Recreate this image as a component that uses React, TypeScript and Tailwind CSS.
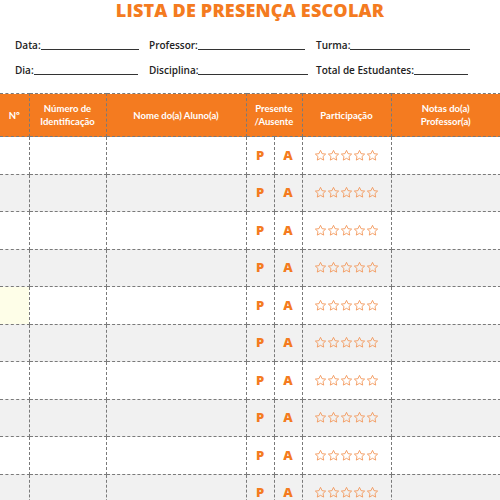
const rows = Array.from({ length: 10 }, (_, i) => i);

function Star() {
  return (
    <svg width="13" height="13" viewBox="0 0 24 24" fill="none" stroke="#f39a5e" strokeWidth="1.7" strokeLinejoin="round">
      <path d="M12 2.5l2.9 6.1 6.6.8-4.9 4.5 1.3 6.6L12 17.2l-5.9 3.3 1.3-6.6-4.9-4.5 6.6-.8z" />
    </svg>
  );
}

function Field({ label, className }: { label: string; className: string }) {
  return (
    <div className={`flex items-end ${className}`}>
      <span>{label}</span>
      <span className="mb-[2px] flex-1 border-b border-[#333]" />
    </div>
  );
}

export default function App() {
  const cell = "border border-dashed border-[#7a7a7a]";
  const letter = `${cell} text-center font-['Open_Sans',sans-serif] text-[13px] font-extrabold text-[#f47b20]`;
  return (
    <div className="h-[500px] w-[500px] overflow-hidden bg-white font-['Open_Sans',sans-serif]">
      <h1 className="h-[20px] text-center text-[18px] font-extrabold leading-[20px] tracking-[0.2px] text-[#f47b20]">
        LISTA DE PRESENÇA ESCOLAR
      </h1>

      <div className="mt-[19px] flex flex-col gap-[12px] pl-[15px] text-[10px] font-semibold leading-[13px] text-[#222]">
        <div className="flex">
          <Field label="Data:" className="w-[124px]" />
          <Field label="Professor:" className="ml-[10px] w-[156px]" />
          <Field label="Turma:" className="ml-[11px] w-[154px]" />
        </div>
        <div className="flex">
          <Field label="Dia:" className="w-[123px]" />
          <Field label="Disciplina:" className="ml-[11px] w-[159px]" />
          <Field label="Total de Estudantes:" className="ml-[8px] w-[152px]" />
        </div>
      </div>

      <table className="mt-[16px] w-[501px] table-fixed border-collapse font-['Lato',sans-serif]">
        <colgroup>
          <col className="w-[29px]" />
          <col className="w-[77px]" />
          <col className="w-[140px]" />
          <col className="w-[28px]" />
          <col className="w-[28px]" />
          <col className="w-[89px]" />
          <col />
        </colgroup>
        <thead>
          <tr className="h-[43px] bg-[#f47b20] text-[9.5px] font-bold leading-[13px] text-white">
            <th className={`${cell} border-l-0`}>Nº</th>
            <th className={cell}>Número de<br />Identificação</th>
            <th className={cell}>Nome do(a) Aluno(a)</th>
            <th className={cell} colSpan={2}>Presente<br />/Ausente</th>
            <th className={cell}>Participação</th>
            <th className={cell}>Notas do(a)<br />Professor(a)</th>
          </tr>
        </thead>
        <tbody>
          {rows.map(i => (
            <tr key={i} className={`h-[37.5px] ${i % 2 ? "bg-[#f1f1f1]" : "bg-white"}`}>
              <td className={`${cell} border-l-0 ${i === 4 ? "bg-[#fefee8]" : ""}`} />
              <td className={cell} />
              <td className={cell} />
              <td className={letter}>P</td>
              <td className={letter}>A</td>
              <td className={cell}>
                <div className="flex justify-center">
                  <Star /><Star /><Star /><Star /><Star />
                </div>
              </td>
              <td className={cell} />
            </tr>
          ))}
        </tbody>
      </table>
    </div>
  );
}
